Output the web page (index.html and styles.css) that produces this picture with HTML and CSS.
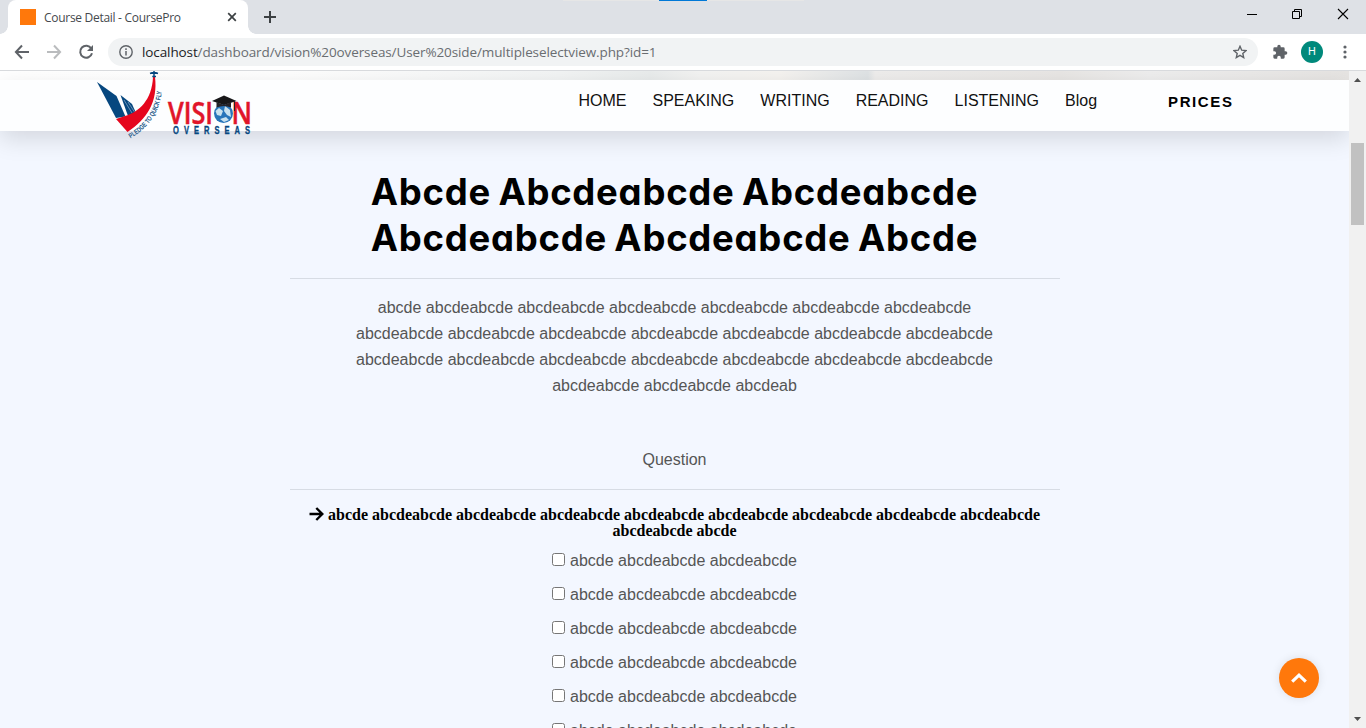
FILE: index.html
```html
<!DOCTYPE html>
<html lang="en">
<head>
<meta charset="utf-8">
<title>Course Detail - CoursePro</title>
<link rel="stylesheet" href="styles.css">
</head>
<body>
<div class="window">
  <div class="tabstrip">
    <span class="snap-bar"><span class="snap-active"></span></span>
    <div class="tab">
      <span class="favicon"></span>
      <span class="tab-title">Course Detail - CoursePro</span>
      <svg class="tab-close" width="10" height="10" viewBox="0 0 10 10"><path d="M1.2 1.2 8.8 8.8M8.8 1.2 1.2 8.8" stroke="#3c4043" stroke-width="1.7"/></svg>
    </div>
    <svg class="new-tab" width="12" height="12" viewBox="0 0 12 12"><path d="M6 0V12M0 6H12" stroke="#3c4043" stroke-width="2"/></svg>
    <div class="controls">
      <svg width="10" height="12" viewBox="0 0 10 12"><path d="M0 6.5H10" stroke="#000"/></svg>
      <svg width="12" height="12" viewBox="0 0 12 12"><path d="M1.500 3.500H8.500V10.500H1.500ZM3.500 3.500V1.500H10.500V8.500H8.500" fill="none" stroke="#000"/></svg>
      <svg width="12" height="12" viewBox="0 0 12 12"><path d="M1 1 11 11M11 1 1 11" stroke="#000" stroke-width="1.100"/></svg>
    </div>
  </div>
  <div class="toolbar">
    <svg class="tool" width="16" height="16" viewBox="0 0 16 16"><path d="M8 1.500 1.900 8 8 14.500M2 8H15" fill="none" stroke="#5f6368" stroke-width="2"/></svg>
    <svg class="tool" width="16" height="16" viewBox="0 0 16 16"><path d="M8 1.500 14.100 8 8 14.500M14 8H1" fill="none" stroke="#babcbe" stroke-width="2"/></svg>
    <svg class="tool" width="16" height="16" viewBox="0 0 16 16"><path d="M13.300 4.500A6 6 0 1 0 14 9.300" fill="none" stroke="#5f6368" stroke-width="2"/><path d="M15 1V7H9Z" fill="#5f6368"/></svg>
    <div class="omnibox">
      <svg width="14" height="14" viewBox="0 0 14 14"><circle cx="7" cy="7" r="6.200" fill="none" stroke="#5f6368" stroke-width="1.400"/><path d="M7 6V10.500M7 3.300V4.900" stroke="#5f6368" stroke-width="1.500"/></svg>
      <span class="url"><b>localhost</b>/dashboard/vision%20overseas/User%20side/multipleselectview.php?id=1</span>
      <svg class="star" width="14" height="14" viewBox="0 0 14 14"><path d="M7 1.300 8.700 5.200 13 5.600 9.800 8.400 10.700 12.600 7 10.400 3.300 12.600 4.200 8.400 1 5.600 5.300 5.200Z" fill="none" stroke="#5f6368" stroke-width="1.400"/></svg>
    </div>
    <svg class="puzzle" width="16" height="16" viewBox="0 0 24 24"><path fill="#5f6368" d="M20.500 11H19V7a2 2 0 0 0-2-2h-4V3.500a2.500 2.500 0 0 0-5 0V5H4a2 2 0 0 0-2 2v3.800h1.500a2.700 2.700 0 0 1 0 5.400H2V20a2 2 0 0 0 2 2h3.800v-1.500a2.700 2.700 0 0 1 5.400 0V22H17a2 2 0 0 0 2-2v-4h1.500a2.500 2.500 0 0 0 0-5Z"/></svg>
    <span class="avatar">H</span>
    <svg class="dots" width="4" height="14" viewBox="0 0 4 14" fill="#5f6368"><circle cx="2" cy="2" r="1.600"/><circle cx="2" cy="7" r="1.600"/><circle cx="2" cy="12" r="1.600"/></svg>
  </div>
  <div class="viewport">
    <div class="page">
      <div class="hero-strip"></div>
      <header class="site-header">
        <svg class="logo" width="160" height="70" viewBox="0 0 160 70">
          <path d="M2 11 21.500 25 30.500 45.500 21 47Z" fill="#06477f"/>
          <path d="M25.500 24 37 33 41 42 33 45Z" fill="#06477f"/>
          <path d="M29 29 37 42M33 31 39.500 41" stroke="#8fb0ce" stroke-width=".7"/>
          <path d="M21 48 30 45C44 41 57 29 58 6L60 6C63 31 52 48 32.500 61Z" fill="#e5061d"/>
          <path d="M55 2.500 59 1 63 2.500M59 0V6M57.300 5.500H61" fill="none" stroke="#06477f" stroke-width="1.500"/>
          <path id="slogan" d="M35.500 67.500Q66 49 67 16" fill="none"/>
          <text class="slogan"><textPath href="#slogan" textLength="59" lengthAdjust="spacingAndGlyphs">PLEDGE TO QUICK FLY</textPath></text>
          <text class="brand" x="73" y="52.500" textLength="45" lengthAdjust="spacingAndGlyphs">VISI</text>
          <text class="brand" x="136.500" y="52.500" textLength="20.500" lengthAdjust="spacingAndGlyphs">N</text>
          <circle cx="128.500" cy="42.500" r="9.500" fill="#2875ba"/>
          <path d="M120.500 40 124 37 128 40 126 45 122 44ZM130 35 135 39 136 46 132 44 129 40ZM125 48 131 46 134 49 129 51Z" fill="#c9e2ef"/>
          <path d="M117 30 129 24.500 141.500 30 129 34Z" fill="#171719"/><path d="M121.500 31V36.500Q129 33.500 136 36.500V31L129 34Z" fill="#252329"/><path d="M139.500 30V40" stroke="#252329"/>
          <text class="brand-sub" transform="translate(78 63) scale(.72 1)" textLength="107" lengthAdjust="spacing">OVERSEAS</text>
        </svg>
        <nav class="nav"><a>HOME</a><a>SPEAKING</a><a>WRITING</a><a>READING</a><a>LISTENING</a><a>Blog</a><a class="prices">PRICES</a></nav>
      </header>
      <main class="content">
        <h1 class="title">Abcde Abcdeabcde Abcdeabcde<br>Abcdeabcde Abcdeabcde Abcde</h1>
        <p class="passage">abcde abcdeabcde abcdeabcde abcdeabcde abcdeabcde abcdeabcde abcdeabcde<br>abcdeabcde abcdeabcde abcdeabcde abcdeabcde abcdeabcde abcdeabcde abcdeabcde<br>abcdeabcde abcdeabcde abcdeabcde abcdeabcde abcdeabcde abcdeabcde abcdeabcde<br>abcdeabcde abcdeabcde abcdeab</p>
        <p class="label">Question</p>
        <h4 class="question"><svg class="arrow" width="15" height="14" viewBox="0 0 15 14"><path d="M7.300 1 13.300 7 7.300 13M13 7H.500" fill="none" stroke="#000" stroke-width="2.400"/></svg> abcde abcdeabcde abcdeabcde abcdeabcde abcdeabcde abcdeabcde abcdeabcde abcdeabcde abcdeabcde<br>abcdeabcde abcde</h4>
        <div class="options">
          <label class="option"><input class="check" type="checkbox">abcde abcdeabcde abcdeabcde</label>
          <label class="option"><input class="check" type="checkbox">abcde abcdeabcde abcdeabcde</label>
          <label class="option"><input class="check" type="checkbox">abcde abcdeabcde abcdeabcde</label>
          <label class="option"><input class="check" type="checkbox">abcde abcdeabcde abcdeabcde</label>
          <label class="option"><input class="check" type="checkbox">abcde abcdeabcde abcdeabcde</label>
          <label class="option"><input class="check" type="checkbox">abcde abcdeabcde abcdeabcde</label>
        </div>
      </main>
      <div class="to-top"><svg width="16" height="10" viewBox="0 0 16 10"><path d="M1.200 8.600 8 2.200 14.800 8.600" fill="none" stroke="#fff" stroke-width="3.200"/></svg></div>
    </div>
    <div class="scrollbar">
      <svg width="7" height="4" viewBox="0 0 7 4"><path d="M0 4 3.500 0 7 4Z" fill="#505050"/></svg>
      <span class="thumb"></span>
      <svg class="down" width="7" height="4" viewBox="0 0 7 4"><path d="M0 0 3.500 4 7 0Z" fill="#505050"/></svg>
    </div>
  </div>
</div>
</body>
</html>
```
FILE: styles.css
```css
* { box-sizing: border-box; }
body { margin: 0; overflow: hidden; font-family: "Liberation Sans", Arial, sans-serif; }
svg { display: block; flex: none; }
.window { width: 1366px; height: 728px; display: flex; flex-direction: column; overflow: hidden; }
.tabstrip { position: relative; height: 34px; flex: none; background: #dee1e6; display: flex; align-items: center; padding-left: 8px; }
.snap-bar { position: absolute; top: 0; left: 563px; width: 241px; height: 1px; background: #e6e6e6; }
.snap-active { position: absolute; left: 96px; width: 48px; height: 1px; background: #0078d7; }
.tab { position: relative; width: 240px; height: 34px; background: #fff; border-radius: 8px 8px 0 0; display: flex; align-items: center; padding: 0 11px 0 12px; }
.tab::before, .tab::after { content: ""; position: absolute; bottom: 0; width: 8px; height: 8px; }
.tab::before { left: -8px; background: radial-gradient(circle at 0 0, #dee1e6 7.5px, #fff 8px); }
.tab::after { right: -8px; background: radial-gradient(circle at 100% 0, #dee1e6 7.5px, #fff 8px); }
.favicon { width: 16px; height: 16px; background: #ff780b; margin-right: 8px; }
.tab-title { font: 12px "Open Sans", sans-serif; letter-spacing: -.29px; color: #45494d; white-space: nowrap; }
.tab-close { margin-left: auto; }
.new-tab { margin-left: 16px; }
.controls { margin-left: auto; display: flex; align-items: center; gap: 34px; padding: 0 17px 6px 0; }
.toolbar { height: 37px; flex: none; display: flex; align-items: center; background: #fff; border-bottom: 1px solid #d8dadd; padding-left: 14px; }
.tool { margin-right: 16px; }
.omnibox { width: 1150px; height: 28px; border-radius: 14px; background: #f1f3f4; display: flex; align-items: center; padding: 0 11px; margin-left: -2px; }
.url { font: 13.5px "Open Sans", sans-serif; letter-spacing: -.105px; margin-left: 9px; color: #696d71; white-space: nowrap; }
.url b { font-weight: 400; color: #202124; }
.star { margin-left: auto; }
.puzzle { margin-left: 14px; }
.avatar { width: 22px; height: 22px; margin-left: 13px; border-radius: 50%; background: #00897b; color: #fff; font: 11px/22px Roboto, sans-serif; text-align: center; }
.dots { margin-left: 20px; }
.viewport { flex: 1; min-height: 0; display: flex; }
.page { position: relative; width: 1349px; overflow: hidden; background: #f3f7ff; }
.hero-strip { height: 9px; background: linear-gradient(90deg, #fff 0, #fefefe 290px, #f2f4f4 560px, #e9ecec 650px, #f3f3f2 700px, #f5f3f0 780px, #dfe3e5 868px, #eeedec 875px, #e8e6e4 1060px, #eee 1150px, #e6e4e2 1349px); }
.site-header { position: relative; height: 51px; background: #fdfeff; box-shadow: 0 8px 24px rgba(0,0,0,.13); display: flex; align-items: flex-start; }
.logo { margin: -9px 0 0 95px; overflow: visible; }
.slogan { font: bold 7px "Liberation Sans", sans-serif; fill: #235887; }
.brand { font: 600 30px "Open Sans", sans-serif; fill: #e1152a; stroke: #e1152a; stroke-width: .5px; }
.brand-sub { font: bold 10.5px "Liberation Sans", sans-serif; fill: #06477f; stroke: #06477f; stroke-width: .3px; }
.nav { margin-left: 323.5px; display: flex; gap: 26px; padding-top: 11px; font-size: 16px; line-height: 20px; color: #111; white-space: nowrap; }
.prices { margin-left: 45px; font-weight: 700; font-size: 15px; line-height: 21px; letter-spacing: 1.6px; color: #000; }
.content { width: 770px; margin: 0 auto; padding-top: 38px; text-align: center; color: #555; }
.title { margin: 0; padding-bottom: 17px; border-bottom: 1px solid #d7dce4; color: #000; font: 700 36.5px/46px Inter, sans-serif; font-feature-settings: "cv11"; letter-spacing: .75px; word-spacing: -2px; white-space: nowrap; }
.passage { margin: 0; padding-top: 16px; font-size: 16px; line-height: 26px; white-space: nowrap; }
.label { margin: 0; padding: 48px 0 16px; border-bottom: 1px solid #d7dce4; font-size: 16px; line-height: 26px; }
.question { margin: 0; padding-top: 17px; font: 700 16px/16px "Liberation Serif", serif; color: #000; white-space: nowrap; }
.arrow { display: inline-block; vertical-align: -1px; }
.options { display: flex; flex-direction: column; align-items: center; gap: 8px; padding-top: 9px; }
.option { display: flex; align-items: center; font-size: 16px; line-height: 26px; white-space: nowrap; }
.check { margin: 0 5px 4px 0; width: 13px; height: 13px; }
.to-top { position: absolute; left: 1279px; top: 587px; width: 40px; height: 40px; border-radius: 50%; background: #ff780b; display: flex; align-items: center; justify-content: center; box-shadow: 0 0 10px rgba(0,0,0,.1); }
.scrollbar { width: 17px; background: #f1f1f1; display: flex; flex-direction: column; align-items: center; padding: 7px 0; }
.thumb { width: 13px; height: 82px; background: #c1c1c1; margin-top: 61px; }
.down { margin-top: auto; }
```
